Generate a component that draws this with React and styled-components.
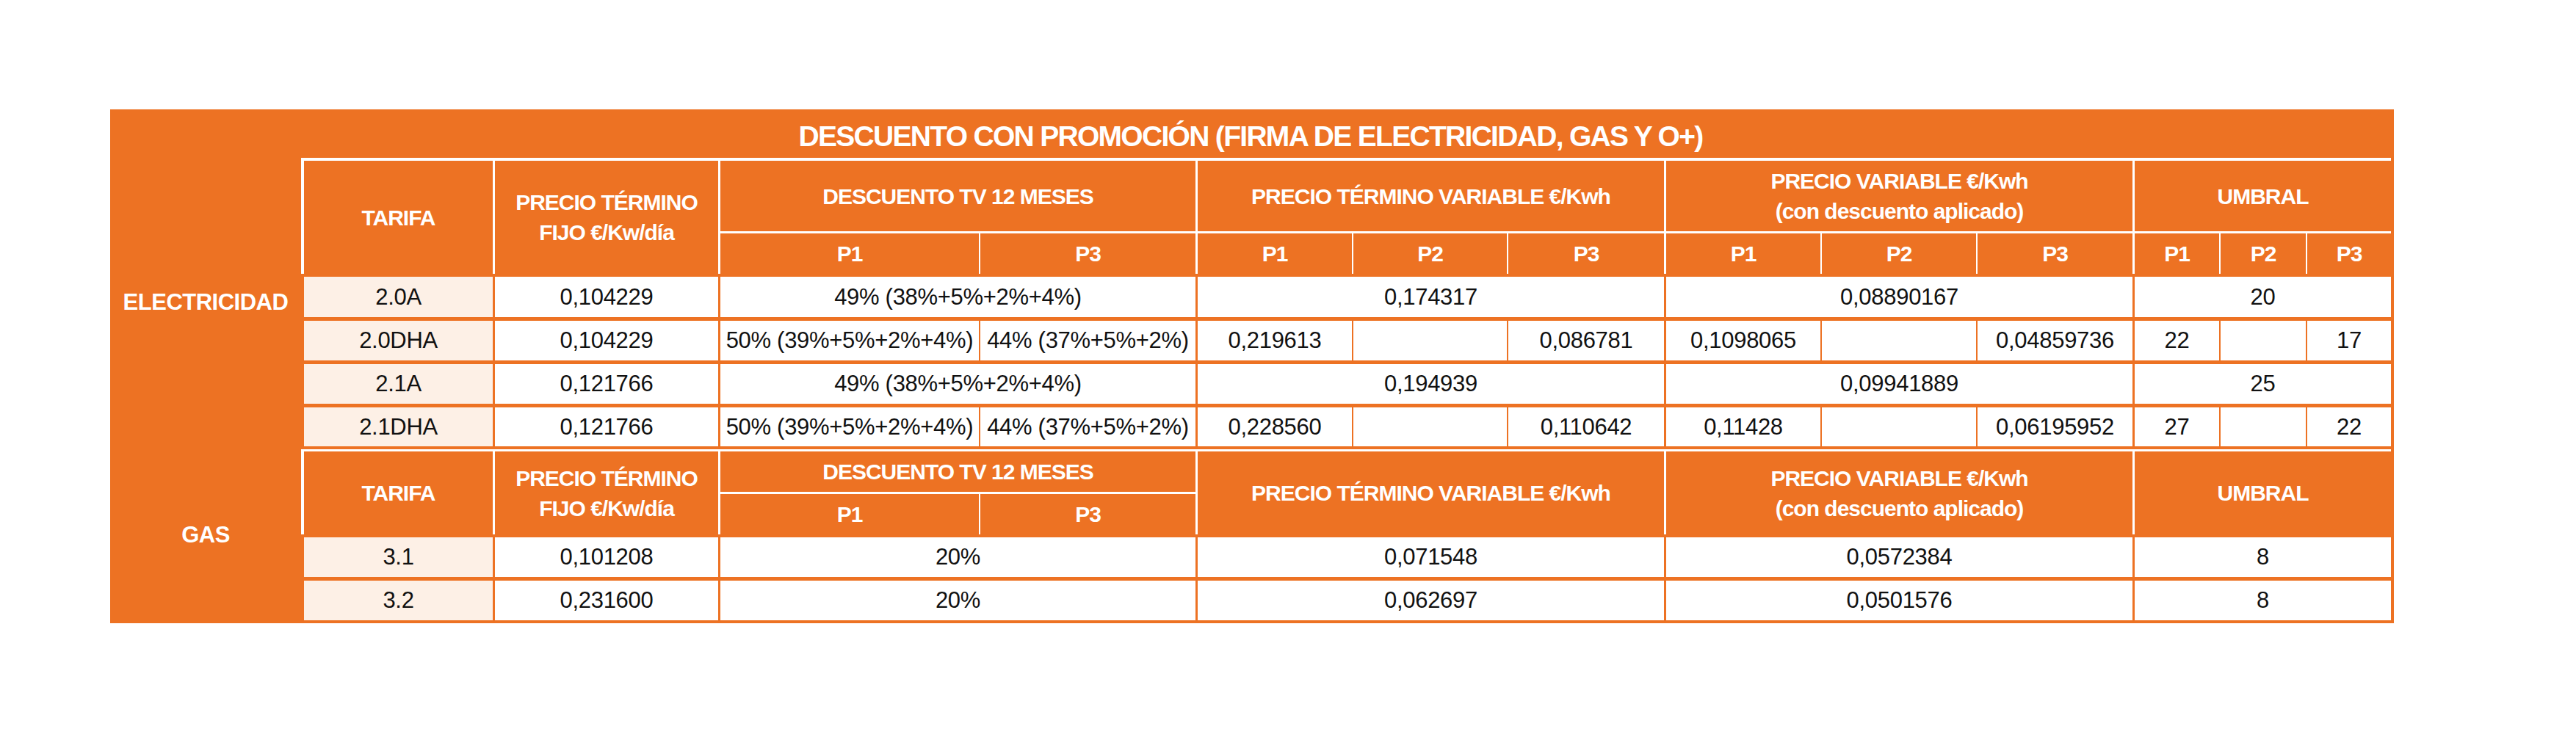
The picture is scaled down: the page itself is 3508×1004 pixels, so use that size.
import styled, { createGlobalStyle } from "styled-components";

const ORANGE = "#ed7223";
const PALE = "#fdf0e6";

// left gap / border width per grid column (2 = tarifa ... 14 = umbral P3)
const LEFT = { 2: 4, 3: 3, 4: 3, 5: 2, 6: 3, 7: 2, 8: 2, 9: 3, 10: 2, 11: 2, 12: 3, 13: 2, 14: 2 };

const GlobalStyle = createGlobalStyle`
  body {
    margin: 0;
    background: #fff;
    font-family: "Liberation Sans", Arial, sans-serif;
  }
`;

const place = ({ $c, $cs = 1, $r, $rs = 1 }) => `
  grid-column: ${$c} / span ${$cs};
  grid-row: ${$r} / span ${$rs};
`;

const Page = styled.div`
  padding: 149px 0 0 150px;
`;

const Board = styled.div`
  display: grid;
  box-sizing: border-box;
  width: 3110px;
  grid-template-columns: 260px 261px 307px 355px 295px 213px 211px 214px 213px 212px 213px 118px 118px 116px;
  grid-template-rows: 66px 100px 58px 59px 59px 59px 58px 62px 58px 58px 59px;
  padding: 0 4px 4px 0;
  background: ${ORANGE};
`;

const Title = styled.div`
  grid-column: 1 / -1;
  grid-row: 1;
  display: flex;
  align-items: center;
  justify-content: center;
  padding-top: 8px;
  color: #fff;
  font-weight: 700;
  font-size: 39px;
  letter-spacing: -1.7px;
`;

const Section = styled.div`
  ${place}
  display: flex;
  align-items: center;
  justify-content: center;
  padding-top: ${(p) => p.$pt || 0}px;
  color: #fff;
  font-weight: 700;
  font-size: 31px;
  letter-spacing: -0.5px;
`;

const HeadCell = styled.div`
  ${place}
  display: flex;
  align-items: center;
  justify-content: center;
  text-align: center;
  margin-top: ${(p) => p.$mt || 0}px;
  border-top: ${(p) => p.$bt}px solid #fff;
  border-left: ${(p) => LEFT[p.$c]}px solid #fff;
  color: #fff;
  font-weight: 700;
  font-size: 30px;
  line-height: 41px;
  letter-spacing: -1px;
`;

const DataCell = styled.div`
  ${place}
  display: flex;
  align-items: center;
  justify-content: center;
  margin: ${(p) => p.$mt}px 0 0 ${(p) => LEFT[p.$c]}px;
  background: ${(p) => (p.$pale ? PALE : "#fff")};
  color: #111;
  font-size: 31px;
  letter-spacing: -0.3px;
  white-space: nowrap;
`;

const elecRows = [
  [["2.0A"], ["0,104229"], ["49% (38%+5%+2%+4%)", 2], ["0,174317", 3], ["0,08890167", 3], ["20", 3]],
  [["2.0DHA"], ["0,104229"], ["50% (39%+5%+2%+4%)"], ["44% (37%+5%+2%)"], ["0,219613"], [""], ["0,086781"], ["0,1098065"], [""], ["0,04859736"], ["22"], [""], ["17"]],
  [["2.1A"], ["0,121766"], ["49% (38%+5%+2%+4%)", 2], ["0,194939", 3], ["0,09941889", 3], ["25", 3]],
  [["2.1DHA"], ["0,121766"], ["50% (39%+5%+2%+4%)"], ["44% (37%+5%+2%)"], ["0,228560"], [""], ["0,110642"], ["0,11428"], [""], ["0,06195952"], ["27"], [""], ["22"]],
];

const gasRows = [
  [["3.1"], ["0,101208"], ["20%", 2], ["0,071548", 3], ["0,0572384", 3], ["8", 3]],
  [["3.2"], ["0,231600"], ["20%", 2], ["0,062697", 3], ["0,0501576", 3], ["8", 3]],
];

const DataRow = ({ cells, row, first }) => {
  let col = 2;
  return cells.map(([text, span = 1]) => {
    const c = col;
    col += span;
    return (
      <DataCell key={c} $c={c} $cs={span} $r={row} $mt={first ? 4 : 5} $pale={c === 2}>
        {text}
      </DataCell>
    );
  });
};

const Periods = ({ start, labels, row }) =>
  labels.map((l, i) => (
    <HeadCell key={l + i} $c={start + i} $r={row} $bt={3}>
      {l}
    </HeadCell>
  ));

export default function App() {
  return (
    <Page>
      <GlobalStyle />
      <Board>
        <Title>DESCUENTO CON PROMOCIÓN (FIRMA DE ELECTRICIDAD, GAS Y O+)</Title>

        <Section $c={1} $r={2} $rs={6}>ELECTRICIDAD</Section>
        <HeadCell $c={2} $r={2} $rs={2} $bt={4}>TARIFA</HeadCell>
        <HeadCell $c={3} $r={2} $rs={2} $bt={4}>
          PRECIO TÉRMINO<br />FIJO €/Kw/día
        </HeadCell>
        <HeadCell $c={4} $cs={2} $r={2} $bt={4}>DESCUENTO TV 12 MESES</HeadCell>
        <HeadCell $c={6} $cs={3} $r={2} $bt={4}>PRECIO TÉRMINO VARIABLE €/Kwh</HeadCell>
        <HeadCell $c={9} $cs={3} $r={2} $bt={4}>
          PRECIO VARIABLE €/Kwh<br />(con descuento aplicado)
        </HeadCell>
        <HeadCell $c={12} $cs={3} $r={2} $bt={4}>UMBRAL</HeadCell>
        <Periods start={4} labels={["P1", "P3"]} row={3} />
        <Periods start={6} labels={["P1", "P2", "P3"]} row={3} />
        <Periods start={9} labels={["P1", "P2", "P3"]} row={3} />
        <Periods start={12} labels={["P1", "P2", "P3"]} row={3} />
        {elecRows.map((cells, i) => (
          <DataRow key={i} cells={cells} row={4 + i} first={i === 0} />
        ))}

        <Section $c={1} $r={8} $rs={4} $pt={4}>GAS</Section>
        <HeadCell $c={2} $r={8} $rs={2} $mt={4} $bt={3}>TARIFA</HeadCell>
        <HeadCell $c={3} $r={8} $rs={2} $mt={4} $bt={3}>
          PRECIO TÉRMINO<br />FIJO €/Kw/día
        </HeadCell>
        <HeadCell $c={4} $cs={2} $r={8} $mt={4} $bt={3}>DESCUENTO TV 12 MESES</HeadCell>
        <HeadCell $c={6} $cs={3} $r={8} $rs={2} $mt={4} $bt={3}>PRECIO TÉRMINO VARIABLE €/Kwh</HeadCell>
        <HeadCell $c={9} $cs={3} $r={8} $rs={2} $mt={4} $bt={3}>
          PRECIO VARIABLE €/Kwh<br />(con descuento aplicado)
        </HeadCell>
        <HeadCell $c={12} $cs={3} $r={8} $rs={2} $mt={4} $bt={3}>UMBRAL</HeadCell>
        <Periods start={4} labels={["P1", "P3"]} row={9} />
        {gasRows.map((cells, i) => (
          <DataRow key={i} cells={cells} row={10 + i} first={i === 0} />
        ))}
      </Board>
    </Page>
  );
}
